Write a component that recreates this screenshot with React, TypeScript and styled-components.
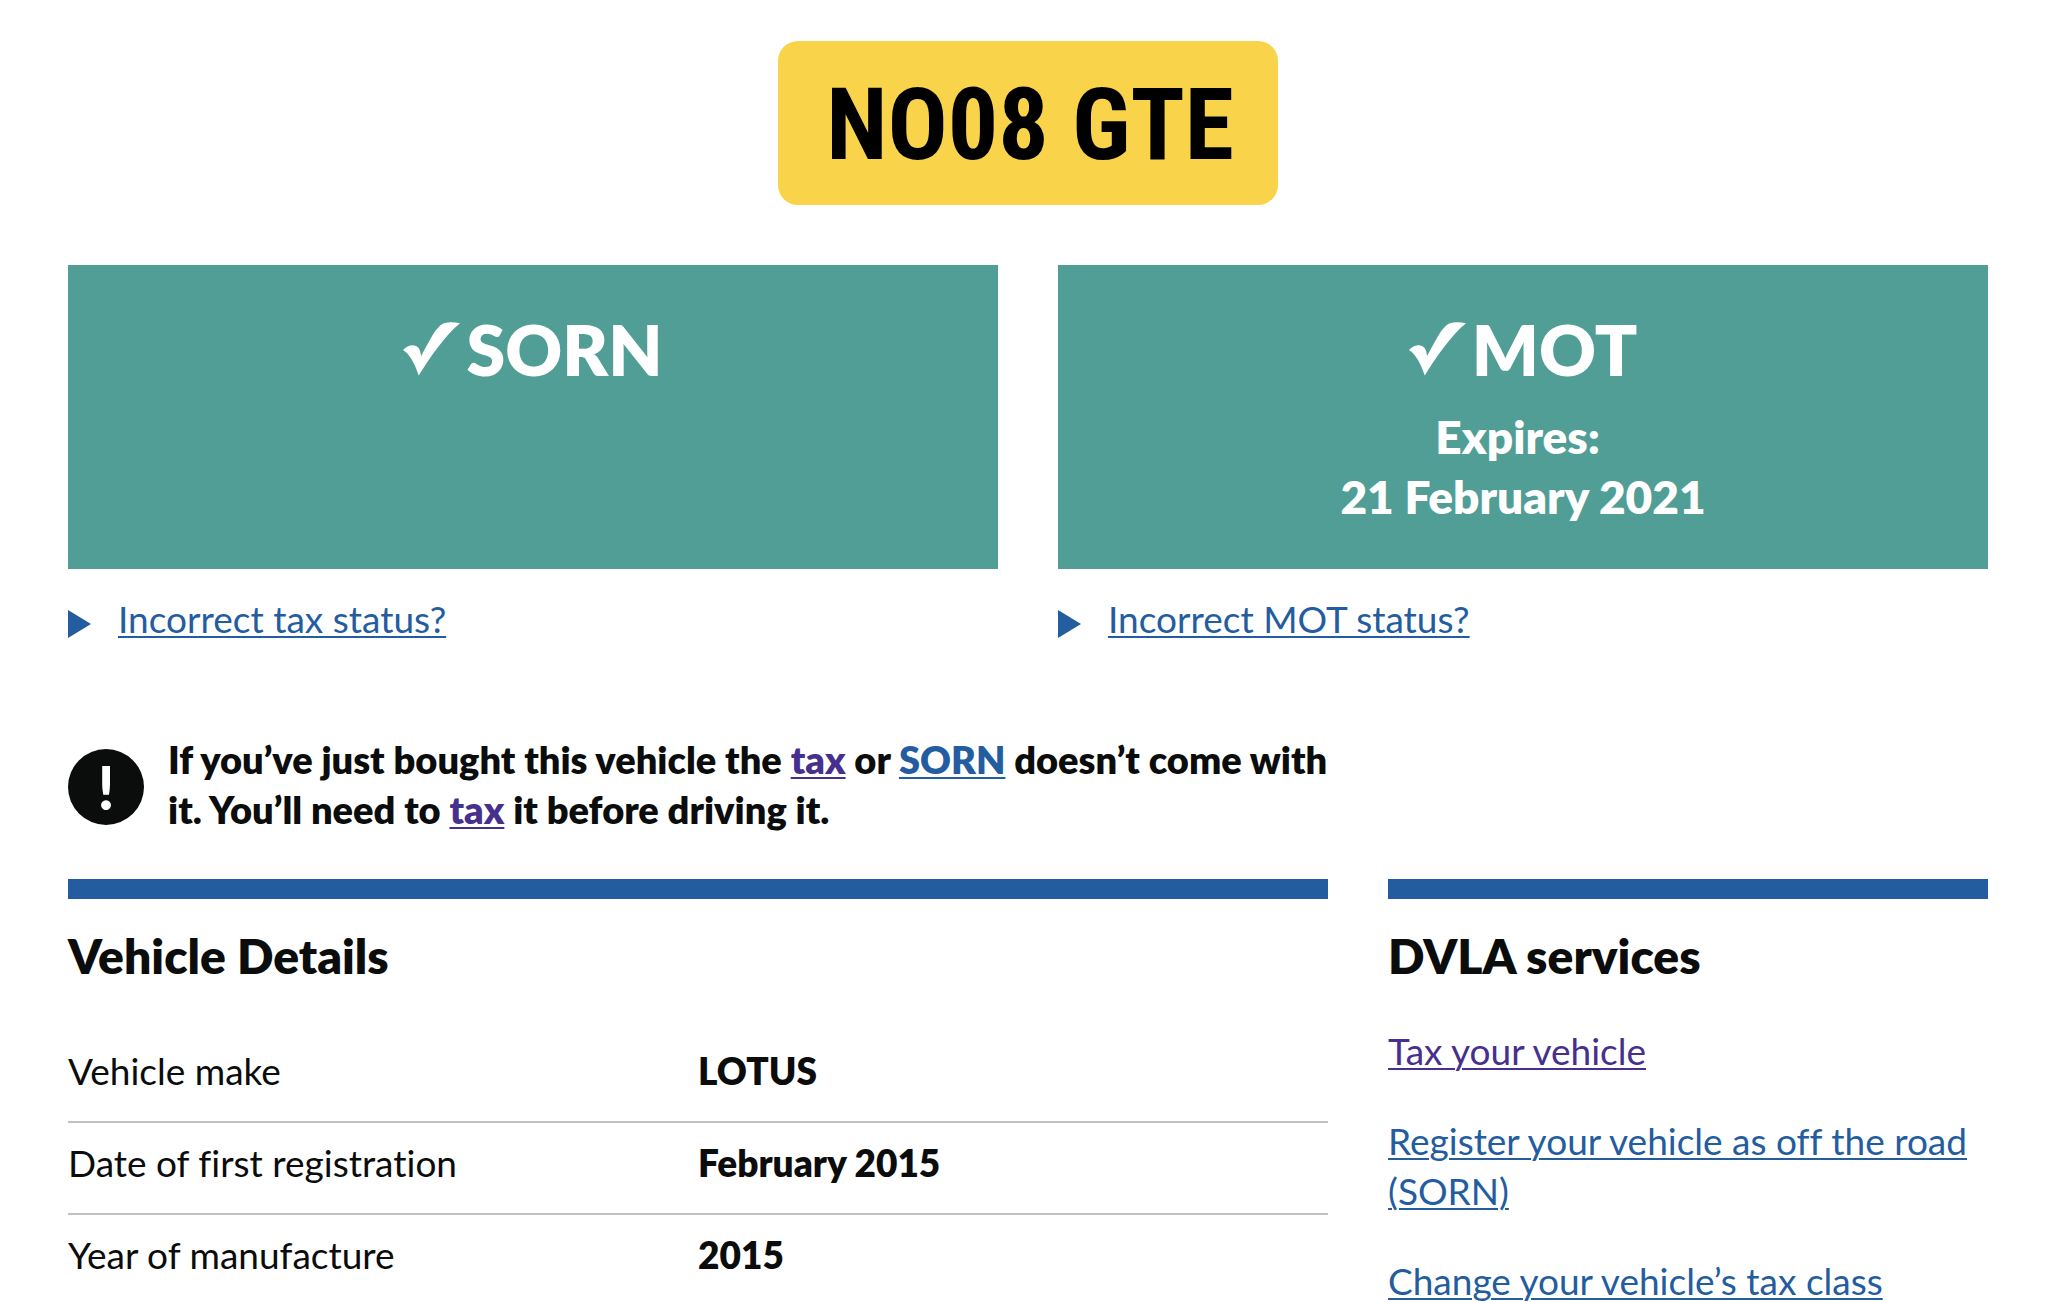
import React from "react";
import styled, { createGlobalStyle } from "styled-components";

const color = {
  text: "#0b0c0c",
  link: "#245d9f",
  visited: "#47308d",
  teal: "#509e95",
  plate: "#f9d44a",
  rule: "#bfc1c3",
};

const GlobalStyle = createGlobalStyle`
  * { box-sizing: border-box; }
  body {
    margin: 0;
    background: #fff;
    color: ${color.text};
    font-family: Lato, "Liberation Sans", sans-serif;
    font-size: 37px;
    font-variant-ligatures: none;
    line-height: 50px;
  }
`;

const Page = styled.main`
  padding: 41px 72px 0 68px;
`;

const PlateRow = styled.div`
  display: flex;
  justify-content: center;
  margin-bottom: 60px;
`;

const Plate = styled.h1`
  margin: 0;
  min-width: 500px;
  padding: 24px 20px 20px 24px;
  border-radius: 20px;
  background: ${color.plate};
  color: #000;
  font-family: "Roboto Condensed", Roboto, sans-serif;
  font-size: 100px;
  font-weight: 700;
  line-height: 120px;
  text-align: center;
`;

const StatusGrid = styled.div`
  display: grid;
  grid-template-columns: 1fr 1fr;
  gap: 25px 60px;
`;

const StatusPanel = styled.section`
  padding: 44px 42px 42px;
  background: ${color.teal};
  color: #fff;
  font-weight: 800;
  text-align: center;
`;

const StatusTitle = styled.h2`
  display: flex;
  justify-content: center;
  align-items: center;
  gap: 6px;
  margin: 0;
  font-size: 70px;
  font-weight: 800;
  line-height: 80px;
`;

const StatusText = styled.p`
  margin: 18px 0 0;
  font-size: 46px;
  line-height: 60px;
`;

const Disclosure = styled.details``;

const Summary = styled.summary`
  display: flex;
  align-items: center;
  gap: 27px;
  color: ${color.link};
  cursor: pointer;
  list-style: none;

  &::before {
    content: "";
    margin-top: 10px;
    border-style: solid;
    border-width: 14px 0 14px 23px;
    border-color: transparent transparent transparent currentColor;
  }

  &::-webkit-details-marker {
    display: none;
  }
`;

const SummaryText = styled.span`
  text-decoration: underline;
  text-decoration-thickness: 2px;
  text-underline-offset: 3px;
`;

const Link = styled.a<{ $visited?: boolean }>`
  color: ${(p) => (p.$visited ? color.visited : color.link)};
  text-decoration: underline;
  text-decoration-thickness: 2px;
  text-underline-offset: 3px;
`;

const Columns = styled.div`
  display: grid;
  grid-template-columns: minmax(0, 1fr) 600px;
  gap: 0 60px;
`;

const Notice = styled.div`
  display: flex;
  align-items: center;
  gap: 24px;
  margin: 90px 0 45px;
`;

const NoticeIcon = styled.span`
  flex: none;
  width: 76px;
  height: 76px;
  margin-top: 6px;
  border-radius: 50%;
  background: ${color.text};
  color: #fff;
  font-size: 60px;
  font-weight: 900;
  line-height: 76px;
  text-align: center;
`;

const NoticeText = styled.strong`
  font-size: 38px;
  font-weight: 800;
`;

const Section = styled.section`
  border-top: 20px solid ${color.link};
`;

const SectionTitle = styled.h2`
  margin: 27px 0 0;
  font-size: 48px;
  font-weight: 800;
  line-height: 60px;
`;

const DetailsTable = styled.table`
  width: 100%;
  margin-top: 45px;
  border-collapse: separate;
  border-spacing: 0;
  table-layout: fixed;

  th,
  td {
    padding: 15px 0 25px;
    border-bottom: 2px solid ${color.rule};
    text-align: left;
  }

  tr:last-child > * {
    padding-bottom: 0;
    border-bottom: 0;
  }
`;

const Label = styled.th`
  font-weight: 400;
`;

const Value = styled.td`
  font-weight: 800;
`;

const LinkList = styled.ul`
  display: grid;
  gap: 40px;
  margin: 40px 0 0;
  padding: 0;
  list-style: none;
`;

const Tick = () => (
  <svg width="57" height="54" viewBox="0 0 170 160" fill="currentColor" aria-hidden="true">
    <path d="M0 83Q12 69 30 69Q51 69 54 101C78 57 98 14 120 4Q140 -3 170 3C122 42 76 112 47 159C35 124 20 95 0 83Z" />
  </svg>
);

const details = [
  ["Vehicle make", "LOTUS"],
  ["Date of first registration", "February 2015"],
  ["Year of manufacture", "2015"],
];

const services = [
  { text: "Tax your vehicle", visited: true },
  { text: "Register your vehicle as off the road (SORN)" },
  { text: "Change your vehicle’s tax class" },
];

export default function App() {
  return (
    <>
      <GlobalStyle />
      <Page>
        <PlateRow>
          <Plate>NO08 GTE</Plate>
        </PlateRow>

        <StatusGrid>
          <StatusPanel>
            <StatusTitle>
              <Tick />
              SORN
            </StatusTitle>
          </StatusPanel>
          <StatusPanel>
            <StatusTitle>
              <Tick />
              MOT
            </StatusTitle>
            <StatusText>
              Expires:{"\u00a0"}
              <br />
              21 February 2021
            </StatusText>
          </StatusPanel>
          <Disclosure>
            <Summary>
              <SummaryText>Incorrect tax status?</SummaryText>
            </Summary>
          </Disclosure>
          <Disclosure>
            <Summary>
              <SummaryText>Incorrect MOT status?</SummaryText>
            </Summary>
          </Disclosure>
        </StatusGrid>

        <Columns>
          <Notice>
            <NoticeIcon aria-hidden="true">!</NoticeIcon>
            <NoticeText>
              If you’ve just bought this vehicle the <Link href="#tax" $visited>tax</Link> or{" "}
              <Link href="#sorn">SORN</Link> doesn’t come with it. You’ll need to{" "}
              <Link href="#tax" $visited>tax</Link> it before driving it.
            </NoticeText>
          </Notice>
        </Columns>

        <Columns>
          <Section>
            <SectionTitle>Vehicle Details</SectionTitle>
            <DetailsTable>
              <tbody>
                {details.map(([label, value]) => (
                  <tr key={label}>
                    <Label scope="row">{label}</Label>
                    <Value>{value}</Value>
                  </tr>
                ))}
              </tbody>
            </DetailsTable>
          </Section>
          <Section>
            <SectionTitle>DVLA services</SectionTitle>
            <LinkList>
              {services.map((service) => (
                <li key={service.text}>
                  <Link href="#services" $visited={service.visited}>
                    {service.text}
                  </Link>
                </li>
              ))}
            </LinkList>
          </Section>
        </Columns>
      </Page>
    </>
  );
}
